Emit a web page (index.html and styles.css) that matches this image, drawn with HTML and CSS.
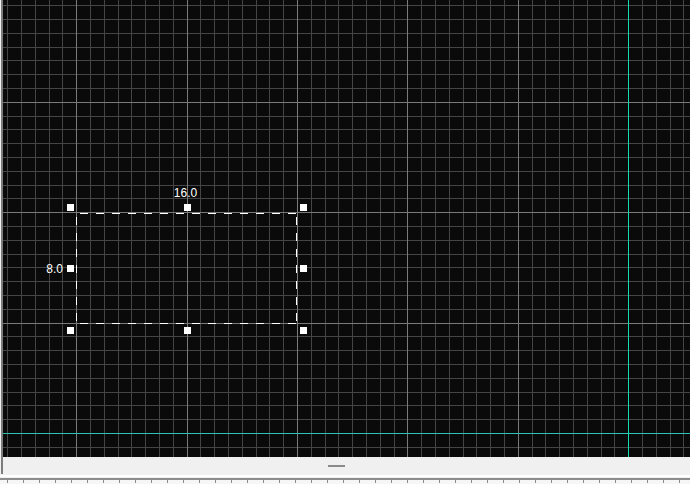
FILE: index.html
```html
<!DOCTYPE html>
<html lang="en">
<head>
<meta charset="utf-8">
<title>Sketch editor</title>
<link rel="stylesheet" href="styles.css">
</head>
<body>
<div class="app">
  <div class="pane">
    <div class="viewport">
      <svg class="canvas" width="687" height="457" viewBox="3 0 687 457" xmlns="http://www.w3.org/2000/svg">
        <path class="grid-minor" d="M7.5 0V457M21.5 0V457M35.5 0V457M49.5 0V457M62.5 0V457M90.5 0V457M104.5 0V457M118.5 0V457M131.5 0V457M145.5 0V457M159.5 0V457M173.5 0V457M200.5 0V457M214.5 0V457M228.5 0V457M242.5 0V457M256.5 0V457M269.5 0V457M283.5 0V457M311.5 0V457M325.5 0V457M338.5 0V457M352.5 0V457M366.5 0V457M380.5 0V457M394.5 0V457M421.5 0V457M435.5 0V457M449.5 0V457M463.5 0V457M476.5 0V457M490.5 0V457M504.5 0V457M532.5 0V457M545.5 0V457M559.5 0V457M573.5 0V457M587.5 0V457M601.5 0V457M614.5 0V457M642.5 0V457M656.5 0V457M670.5 0V457M683.5 0V457"/>
        <path class="grid-minor" d="M3 5.5H690M3 19.5H690M3 33.5H690M3 47.5H690M3 60.5H690M3 74.5H690M3 88.5H690M3 116.5H690M3 129.5H690M3 143.5H690M3 157.5H690M3 171.5H690M3 185.5H690M3 198.5H690M3 226.5H690M3 240.5H690M3 254.5H690M3 267.5H690M3 281.5H690M3 295.5H690M3 309.5H690M3 336.5H690M3 350.5H690M3 364.5H690M3 378.5H690M3 392.5H690M3 405.5H690M3 419.5H690M3 447.5H690"/>
        <path class="grid-major" d="M76.5 0V457M187.5 0V457M297.5 0V457M407.5 0V457M518.5 0V457M3 102.5H690M3 212.5H690M3 323.5H690"/>
        <path class="axis-x" d="M3 433.5H690"/>
        <path class="axis-y" d="M628.5 0V457"/>

        <g class="selection">
          <path d="M76 213.5H297"/>
          <path d="M76.5 213V324"/>
          <path d="M296.5 213V324"/>
          <path d="M76 323.5H297"/>
        </g>

        <g class="handles">
          <rect x="67" y="204" width="7" height="7"/>
          <rect x="184" y="204" width="7" height="7"/>
          <rect x="300" y="204" width="7" height="7"/>
          <rect x="67" y="265" width="7" height="7"/>
          <rect x="300" y="265" width="7" height="7"/>
          <rect x="67" y="327" width="7" height="7"/>
          <rect x="184" y="327" width="7" height="7"/>
          <rect x="300" y="327" width="7" height="7"/>
        </g>

        <text class="dim dim-center" x="185.5" y="197">16.0</text>
        <text class="dim dim-end" x="63" y="273">8.0</text>
      </svg>
    </div>
    <div class="splitter"><span class="grip"></span></div>
  </div>
  <div class="edge"></div>
  <div class="ruler"></div>
</div>
</body>
</html>
```
FILE: styles.css
```css
html, body {
  margin: 0;
  padding: 0;
  background: #f0f0f0;
  overflow: hidden;
  font-family: "Liberation Sans", Arial, sans-serif;
}

.app {
  width: 690px;
  height: 484px;
  display: flex;
  flex-direction: column;
}

.pane {
  height: 474px;
  margin-left: 1px;
  border-left: 2px solid #7c7c7c;
  display: flex;
  flex-direction: column;
}

.viewport {
  height: 457px;
  background: #0a0a0a;
  overflow: hidden;
}

.canvas {
  display: block;
}

.grid-minor {
  fill: none;
  stroke: #454545;
  stroke-width: 1;
  shape-rendering: crispEdges;
}

.grid-major {
  fill: none;
  stroke: #7a7a7a;
  stroke-width: 1;
  shape-rendering: crispEdges;
}

.axis-x {
  fill: none;
  stroke: #2cc4b4;
  stroke-width: 1;
  shape-rendering: crispEdges;
}

.axis-y {
  fill: none;
  stroke: #12dcb0;
  stroke-width: 1;
  shape-rendering: crispEdges;
}

.selection path {
  fill: none;
  stroke: #ffffff;
  stroke-width: 1;
  stroke-dasharray: 8 8;
  stroke-dashoffset: 12;
  shape-rendering: crispEdges;
}

.handles rect {
  fill: #ffffff;
  shape-rendering: crispEdges;
}

.dim {
  fill: #ffffff;
  font-family: "Liberation Sans", Arial, sans-serif;
  font-size: 12px;
}

.dim-center {
  text-anchor: middle;
}

.dim-end {
  text-anchor: end;
}

.splitter {
  flex: 1;
  padding: 8px 0 0 325px;
  box-sizing: border-box;
}

.grip {
  display: block;
  width: 17px;
  height: 2px;
  background: #8a8a8a;
}

.edge {
  height: 2px;
  margin: 1px 0;
  background: #ffffff;
}

.ruler {
  flex: 1;
  border-top: 2px solid #8c8c8c;
  background-color: #f6f6f6;
  background-image: linear-gradient(to right, transparent 7px, #8c8c8c 7px, #8c8c8c 8px, transparent 8px);
  background-size: 16px 3px;
  background-repeat: repeat-x;
}
```
